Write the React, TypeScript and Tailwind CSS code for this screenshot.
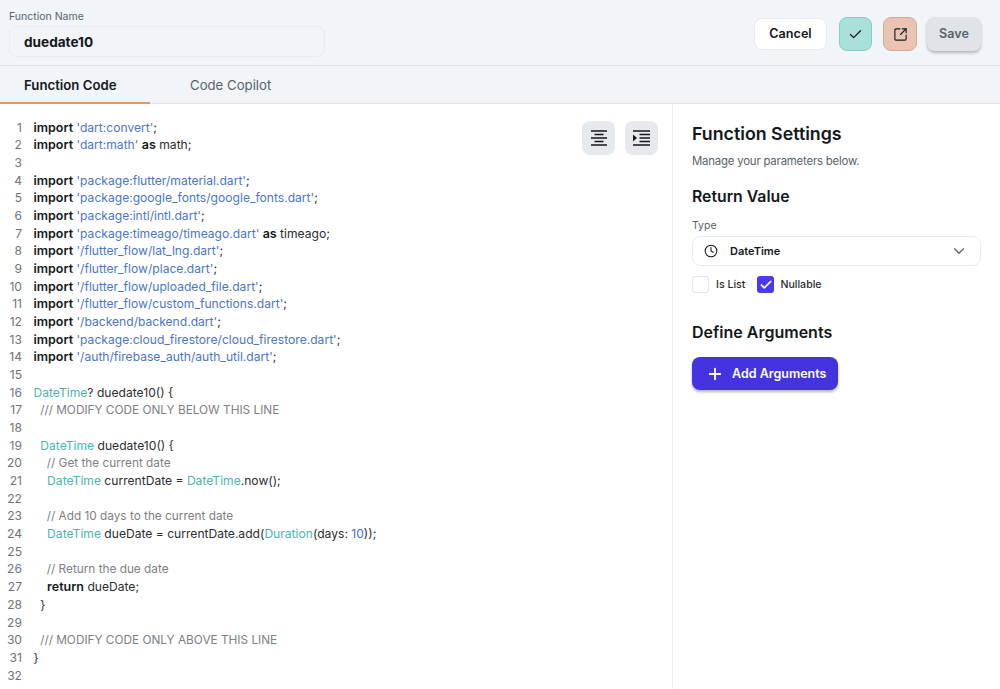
import React from 'react';
import { Check, ChevronDown, Clock, Plus, SquareArrowOutUpRight } from 'lucide-react';

type Tok = [string, string];

const K = 'font-semibold text-[12.5px] text-[#14181b]';
const S = 'text-[#4a76c9]';
const T = 'text-[#4db3b0]';
const C = 'text-[11.8px] text-[#7d8084]';
const P = 'text-[#2a2d30]';
const N = 'text-[#3f6fd8]';

const imp = (path: string): Tok[] => [['import', K], [' ', P], [`'${path}'`, S], [';', P]];

const code: Tok[][] = [
  imp('dart:convert'),
  [['import', K], [' ', P], ["'dart:math'", S], [' ', P], ['as', K], [' math;', P]],
  [],
  imp('package:flutter/material.dart'),
  imp('package:google_fonts/google_fonts.dart'),
  imp('package:intl/intl.dart'),
  [['import', K], [' ', P], ["'package:timeago/timeago.dart'", S], [' ', P], ['as', K], [' timeago;', P]],
  imp('/flutter_flow/lat_lng.dart'),
  imp('/flutter_flow/place.dart'),
  imp('/flutter_flow/uploaded_file.dart'),
  imp('/flutter_flow/custom_functions.dart'),
  imp('/backend/backend.dart'),
  imp('package:cloud_firestore/cloud_firestore.dart'),
  imp('/auth/firebase_auth/auth_util.dart'),
  [],
  [['DateTime', T], ['? duedate10() {', P]],
  [['  /// MODIFY CODE ONLY BELOW THIS LINE', C]],
  [],
  [['  ', P], ['DateTime', T], [' duedate10() {', P]],
  [['    // Get the current date', C]],
  [['    ', P], ['DateTime', T], [' currentDate = ', P], ['DateTime', T], ['.now();', P]],
  [],
  [['    // Add 10 days to the current date', C]],
  [['    ', P], ['DateTime', T], [' dueDate = currentDate.add(', P], ['Duration', T], ['(days: ', P], ['10', N], ['));', P]],
  [],
  [['    // Return the due date', C]],
  [['    ', P], ['return', K], [' dueDate;', P]],
  [['  }', P]],
  [],
  [['  /// MODIFY CODE ONLY ABOVE THIS LINE', C]],
  [['}', P]],
  [],
];

const AlignIcon = () => (
  <svg width="18" height="16" viewBox="0 0 18 16" fill="none" stroke="#14181b" strokeWidth="1.6">
    <path d="M1 1h16M4.5 4.5h9M1 8h16M4.5 11.5h9M1 15h16" />
  </svg>
);

const IndentIcon = () => (
  <svg width="19" height="16" viewBox="0 0 19 16" fill="none" stroke="#14181b" strokeWidth="1.6">
    <path d="M1 1h17M7.5 4.5h10.5M7.5 8h10.5M7.5 11.5h10.5M1 15h17" />
    <path d="M1 4.5 5 8l-4 3.5z" fill="#14181b" stroke="none" />
  </svg>
);

export default function App() {
  return (
    <div className="w-[1000px] h-[689px] overflow-hidden bg-white flex flex-col font-['Inter',sans-serif] text-[#14181b]">
      <div className="h-[66px] shrink-0 bg-[#f1f4f8] border-b border-[#e0e3e7] flex items-start justify-between pl-[9px] pr-[19px]">
        <div className="w-[316px] pt-[10px]">
          <div className="text-[10.5px] leading-[14px] text-[#57636c]">Function Name</div>
          <div className="mt-[2px] h-[31px] rounded-lg border border-[#e8ebef] pl-[14px] pt-px flex items-center text-[13.6px] font-bold">duedate10</div>
        </div>
        <div className="flex items-center pt-[17px]">
          <button className="w-[73px] h-[32px] rounded-lg bg-white border border-[#e8ebef] text-[12.6px] font-semibold">Cancel</button>
          <button className="ml-[12px] w-[33px] h-[34px] rounded-lg bg-[#a9e0d8] border border-[#82cfc6] flex items-center justify-center"><Check size={15} strokeWidth={2} /></button>
          <button className="ml-[11px] w-[34px] h-[34px] rounded-lg bg-[#e9c4b2] border border-[#dca78f] flex items-center justify-center"><SquareArrowOutUpRight size={15} strokeWidth={1.8} /></button>
          <button className="ml-[10px] w-[54px] h-[34px] rounded-lg bg-[#e0e3e7] shadow-[0_2px_3px_rgba(0,0,0,0.25)] text-[12.6px] font-semibold text-[#57636c]">Save</button>
        </div>
      </div>

      <div className="h-[38px] shrink-0 bg-[#f1f4f8] border-b border-[#e0e3e7] flex text-[13.2px]">
        <div className="w-[150px] -mb-px border-b-2 border-[#e8935f] pl-6 pt-[9.5px] font-semibold">Function Code</div>
        <div className="pl-10 pt-[9.5px] text-[#57636c]">Code Copilot</div>
      </div>

      <div className="flex-1 flex min-h-0">
        <div className="relative w-[673px] shrink-0 border-r border-[#e8ebef] pt-[14.7px] text-[12.1px] leading-[17.68px]">
          {code.map((line, i) => (
            <div key={i} className="flex h-[17.68px]">
              <span className="w-[22px] shrink-0 text-right text-[#6f7377]">{i + 1}</span>
              <span className="ml-[11.5px] whitespace-pre">
                {line.map(([text, cls], j) => (
                  <span key={j} className={cls}>{text}</span>
                ))}
              </span>
            </div>
          ))}
          <div className="absolute top-[17px] right-[14px] flex gap-[10px]">
            <button className="w-[33px] h-[34px] rounded-lg bg-[#e6e9ed] flex items-center justify-center"><AlignIcon /></button>
            <button className="w-[33px] h-[34px] rounded-lg bg-[#e6e9ed] flex items-center justify-center"><IndentIcon /></button>
          </div>
        </div>

        <div className="flex-1 pl-[19px] pr-[19px] pt-[19px]">
          <div className="text-[17.8px] leading-[22px] font-semibold">Function Settings</div>
          <div className="mt-[8px] text-[11.4px] leading-[16px] tracking-[-0.2px] text-[#57636c]">Manage your parameters below.</div>
          <div className="mt-[18px] text-[15.8px] leading-[20px] font-semibold">Return Value</div>
          <div className="mt-[12px] text-[10.5px] leading-[14px] text-[#57636c]">Type</div>
          <div className="mt-[3px] h-[30px] rounded-lg border border-[#e8ebef] flex items-center pl-[11px] pr-[12px]">
            <Clock size={14} strokeWidth={1.8} />
            <span className="ml-[12px] flex-1 text-[11px] font-semibold">DateTime</span>
            <ChevronDown size={18} strokeWidth={1.6} className="text-[#57636c]" />
          </div>
          <div className="mt-[10px] flex items-center text-[10.6px] font-medium text-[#2a2d30]">
            <span className="w-[17px] h-[17px] rounded-[3px] border border-[#e0e3e7] bg-white" />
            <span className="ml-[7px] pt-px">Is List</span>
            <span className="ml-[12px] w-[17px] h-[17px] rounded-[3px] bg-[#4b39ef] flex items-center justify-center"><Check size={14} strokeWidth={3} className="text-white" /></span>
            <span className="ml-[6px] pt-px">Nullable</span>
          </div>
          <div className="mt-[29px] text-[16px] leading-[20px] font-semibold">Define Arguments</div>
          <button className="mt-[15px] w-[146px] h-[33px] rounded-lg bg-[#4433e0] shadow-[0_2px_3px_rgba(0,0,0,0.3)] text-white flex items-center pl-[14px] text-[12.5px] font-semibold">
            <Plus size={18} strokeWidth={2.4} />
            <span className="ml-[8px] pt-px">Add Arguments</span>
          </button>
        </div>
      </div>
    </div>
  );
}
